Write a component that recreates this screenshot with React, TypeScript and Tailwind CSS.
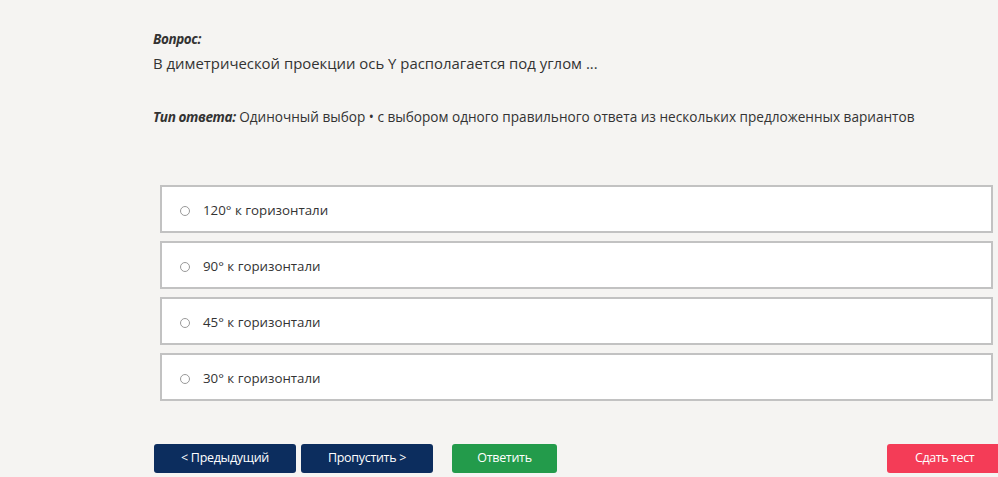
export default function App() {
  const options = ["120° к горизонтали", "90° к горизонтали", "45° к горизонтали", "30° к горизонтали"];
  return (
    <div className="w-[998px] h-[477px] overflow-hidden bg-[#f5f4f2] text-[#333] font-['Open_Sans','Noto_Sans',sans-serif]">
      <div className="pl-[153px] pt-[29px]">
        <div className="text-[13.5px] font-bold italic leading-[20px] tracking-[-0.4px]">Вопрос:</div>
        <div className="text-[14.9px] leading-[22px] mt-[3px]">В диметрической проекции ось Y располагается под углом ...</div>
        <div className="text-[13.6px] leading-[20px] mt-[33px]">
          <span className="font-bold italic tracking-[-0.4px]">Тип ответа:</span> Одиночный выбор • с выбором одного правильного ответа из нескольких предложенных вариантов
        </div>
      </div>
      <div className="ml-[160px] mr-[5px] mt-[58px] flex flex-col gap-[8px]">
        {options.map((o) => (
          <div key={o} className="h-[48px] bg-white border-2 border-[#c2c2c2] flex items-center pl-[18px] pt-[3px]">
            <span className="w-[10px] h-[10px] rounded-full border border-[#9a9a9a] bg-white mr-[13px]" />
            <span className="text-[13.3px] text-[#333]">{o}</span>
          </div>
        ))}
      </div>
      <div className="flex items-center mt-[43px] pl-[154px] text-[12.5px] text-white">
        <div className="shrink-0 w-[142px] h-[29px] rounded-[3px] bg-[#0c2d5e] flex items-center justify-center tracking-[-0.3px]">&lt; Предыдущий</div>
        <div className="shrink-0 w-[132px] h-[29px] rounded-[3px] bg-[#0c2d5e] flex items-center justify-center ml-[5px] tracking-[-0.3px]">Пропустить &gt;</div>
        <div className="shrink-0 w-[105px] h-[29px] rounded-[3px] bg-[#239b4b] flex items-center justify-center ml-[19px] tracking-[-0.3px]">Ответить</div>
        <div className="shrink-0 w-[120px] h-[29px] rounded-[3px] bg-[#f43c57] flex items-center justify-start pl-[28px] ml-[330px] tracking-[-0.4px]">Сдать тест</div>
      </div>
    </div>
  );
}
